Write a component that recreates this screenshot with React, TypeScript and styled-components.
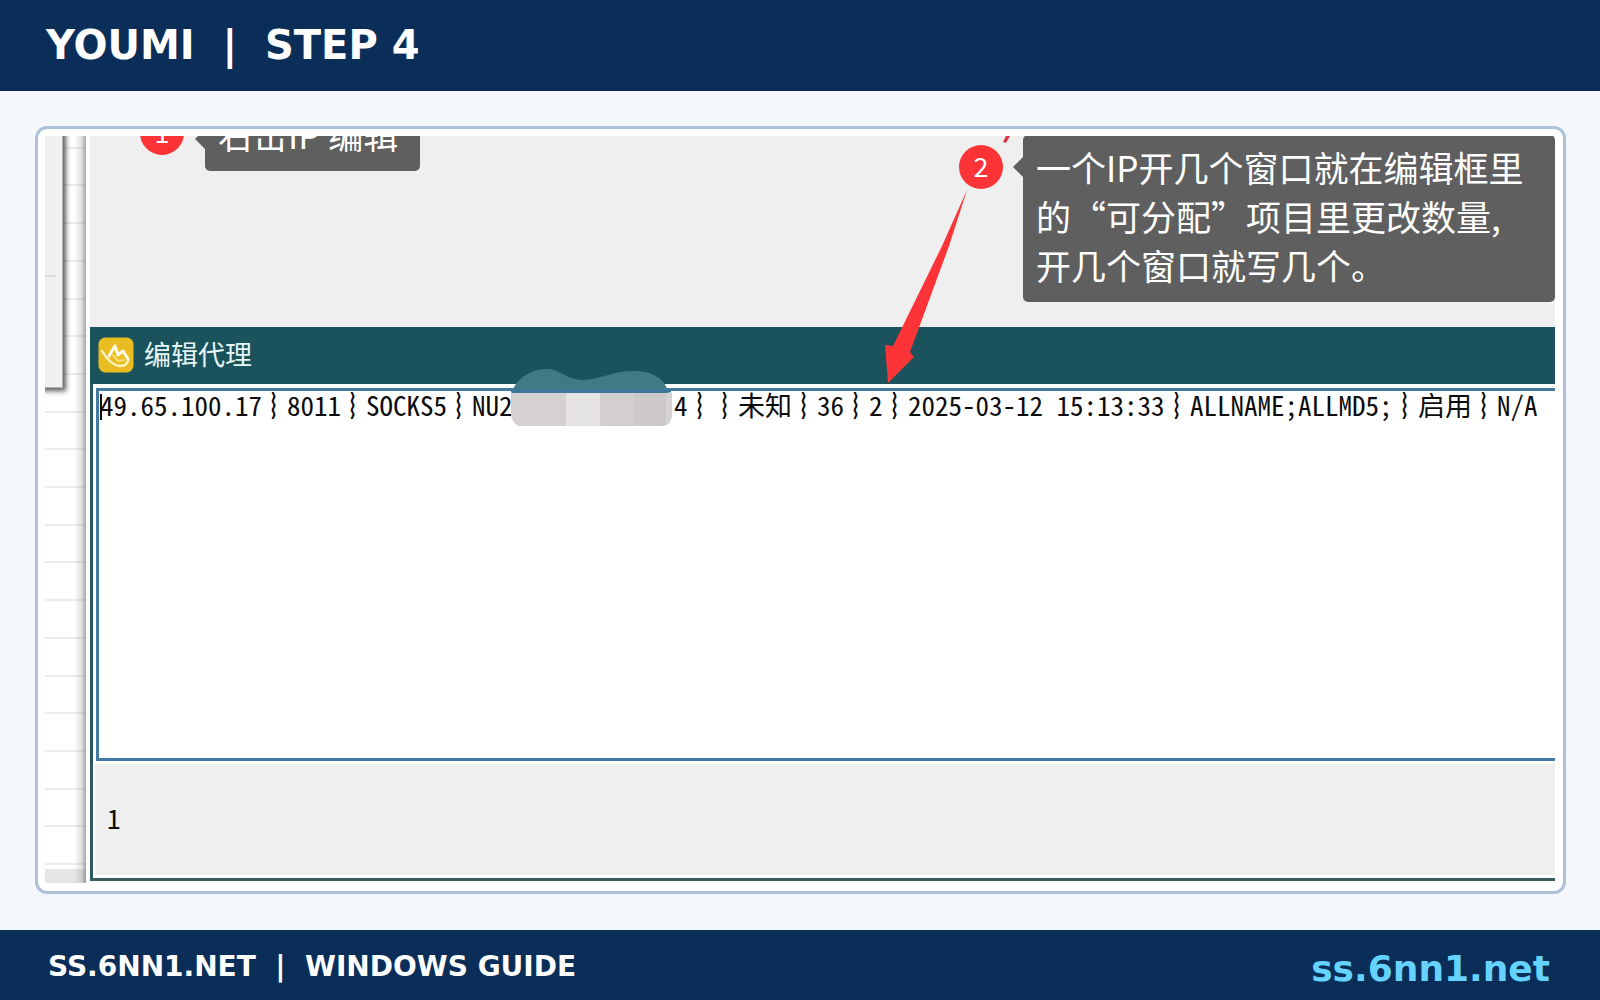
import React from 'react';
import styled, { createGlobalStyle } from 'styled-components';

const brandFont = '"DejaVu Sans", Verdana, sans-serif';
const uiFont = '"Noto Sans CJK SC", "Noto Sans", sans-serif';
const cellFont = '"Noto Sans Mono CJK SC", "Liberation Mono", "Noto Sans CJK SC", monospace';

const navy = '#0b2e59';
const teal = '#1a535c';
const red = '#fc3438';
const slate = '#5f5f5f';

const GlobalStyle = createGlobalStyle`
  *, *::before, *::after { box-sizing: border-box; }
  body { margin: 0; background: #f4f7fc; }
`;

const Page = styled.div`
  display: flex;
  flex-direction: column;
  min-height: 100vh;
  font-family: ${brandFont};
  background: #f4f7fc;
`;

const Header = styled.header`
  display: flex;
  align-items: center;
  height: 91px;
  padding: 0 46px 2px;
  background: ${navy};
`;

const Title = styled.h1`
  margin: 0;
  font-size: 40px;
  line-height: 48px;
  font-weight: 700;
  color: #fff;
  white-space: pre;
`;

const Main = styled.main`
  display: flex;
  flex: 1;
  padding: 35px 34px 36px 35px;
`;

const Card = styled.section`
  display: flex;
  flex: 1;
  min-width: 0;
  padding: 7px 8px 8px 7px;
  border: 3px solid #adc1da;
  border-radius: 12px;
  background: #fff;
`;

const Capture = styled.div`
  position: relative;
  display: grid;
  grid-template-columns: 43px minmax(0, 1fr);
  flex: 1;
  min-width: 0;
  overflow: hidden;
  font-family: ${uiFont};
`;

const Backdrop = styled.div`
  position: relative;
  display: flex;
  flex-direction: column;
  margin-right: 2px;
  overflow: hidden;
  background: #fff;
  &::after {
    content: '';
    position: absolute;
    inset: 0 0 0 auto;
    width: 12px;
    background: linear-gradient(to right, rgba(120, 112, 118, 0), rgba(120, 112, 118, 0.2) 60%, rgba(110, 104, 108, 0.6));
  }
`;

const SheetRows = styled.div`
  display: flex;
  flex-direction: column;
  flex: 1;
  margin-top: -25px;
`;

const SheetRow = styled.div`
  flex: 1;
  border-bottom: 2px solid #ececec;
`;

const SheetFoot = styled.div`
  height: 14px;
  margin-top: 4px;
  background: #e6e6e6;
`;

const SidePanel = styled.div`
  position: absolute;
  top: -10px;
  left: -10px;
  width: 28px;
  height: 262px;
  padding: 149px 6px 0 0;
  border-right: 1px solid #b4b4b4;
  border-bottom: 1px solid #b4b4b4;
  background: #f0f0f0;
  box-shadow: 2px 2px 5px 1px rgba(0, 0, 0, 0.65);
`;

const PanelRule = styled.hr`
  margin: 0;
  border: 0;
  border-top: 2px solid #dcdcdc;
`;

const Desktop = styled.div`
  display: flex;
  flex-direction: column;
  min-width: 0;
  padding: 0 0 2px 2px;
`;

const Workspace = styled.div`
  height: 191px;
  background: #efefef;
`;

const Dialog = styled.div`
  display: flex;
  flex-direction: column;
  flex: 1;
  border-left: 3px solid #2b5a61;
  border-bottom: 3px solid #3b5a5d;
  background: #fff;
`;

const DialogBar = styled.div`
  display: flex;
  align-items: center;
  gap: 10px;
  height: 57px;
  padding: 0 0 2px 8px;
  margin-left: -3px;
  background: ${teal};
`;

const DialogTitle = styled.h2`
  margin: 0;
  padding-bottom: 2px;
  font-size: 27px;
  line-height: 36px;
  font-weight: 400;
  color: #e6f5f6;
`;

const Editor = styled.form`
  flex: 1;
  margin: 4px 0 0 3px;
  border: 3px solid #427aa2;
  border-right: 0;
  background: #fff;
`;

const Record = styled.div`
  display: flex;
  align-items: center;
  height: 28px;
  padding-left: 1px;
  font-family: ${cellFont};
  font-size: 27px;
  line-height: 36px;
  color: #0c0c0c;
  &::before {
    content: '';
    width: 2px;
    height: 26px;
    margin: 4px -2px 0 0;
    background: currentColor;
  }
`;

const Field = styled.input<{ $cells: number }>`
  flex: none;
  width: ${(p) => Math.ceil(p.$cells * 13.5)}px;
  height: 36px;
  padding: 0;
  border: 0;
  outline: 0;
  background: transparent;
  color: inherit;
  font: inherit;
`;

const Divider = styled.span`
  flex: none;
  width: 25px;
  padding-left: 9px;
  font-weight: 700;
`;

const Hidden = styled.span`
  flex: none;
  width: 161px;
`;

const Status = styled.div`
  display: flex;
  align-items: center;
  height: 111px;
  margin: 3px 0 3px 2px;
  padding: 0 12px 4px;
  background: #efefef;
  font-family: ${cellFont};
  font-size: 27px;
  line-height: 36px;
  color: #0c0c0c;
`;

const Callout = styled.div<{ $left: number; $top: number; $width?: number; $arrow: number }>`
  position: absolute;
  left: ${(p) => p.$left}px;
  top: ${(p) => p.$top}px;
  ${(p) => (p.$width ? `width: ${p.$width}px;` : 'right: 0;')}
  padding: 7px 13px 13px;
  border-radius: 5px;
  background: ${slate};
  color: #fff;
  font-size: 35px;
  line-height: 49px;
  white-space: pre;
  &::before {
    content: '';
    position: absolute;
    right: 100%;
    top: ${(p) => p.$arrow}px;
    border: 10px solid transparent;
    border-left-width: 0;
    border-right-color: ${slate};
  }
`;

const Badge = styled.span<{ $left: number; $top: number }>`
  position: absolute;
  left: ${(p) => p.$left}px;
  top: ${(p) => p.$top}px;
  display: flex;
  align-items: center;
  justify-content: center;
  width: 44px;
  height: 44px;
  padding-bottom: 2px;
  border-radius: 50%;
  background: ${red};
  color: #fff;
  font-size: 27px;
  line-height: 36px;
`;

const Overlay = styled.svg<{ $left: number; $top: number }>`
  position: absolute;
  left: ${(p) => p.$left}px;
  top: ${(p) => p.$top}px;
`;

const Footer = styled.footer`
  display: flex;
  align-items: center;
  justify-content: space-between;
  height: 70px;
  padding: 8px 50px 0 48px;
  background: ${navy};
  font-weight: 700;
`;

const Guide = styled.span`
  padding-bottom: 4px;
  font-size: 28px;
  line-height: 36px;
  color: #fff;
  white-space: pre;
`;

const SiteLink = styled.a`
  font-size: 36px;
  line-height: 48px;
  color: #66d3ff;
  text-decoration: none;
`;

type Item = { label: string; value: string; cells: number } | 'divider' | 'hidden';

const record: Item[] = [
  { label: 'IP', value: '49.65.100.17', cells: 12 },
  'divider',
  { label: 'Port', value: '8011', cells: 4 },
  'divider',
  { label: 'Protocol', value: 'SOCKS5', cells: 6 },
  'divider',
  { label: 'User', value: 'NU2', cells: 3 },
  'hidden',
  { label: 'Password', value: '4', cells: 1 },
  'divider',
  'divider',
  { label: 'Region', value: '未知', cells: 4 },
  'divider',
  { label: 'Delay', value: '36', cells: 2 },
  'divider',
  { label: 'Assignable', value: '2', cells: 1 },
  'divider',
  { label: 'Expires', value: '2025-03-12 15:13:33', cells: 19 },
  'divider',
  { label: 'Names', value: 'ALLNAME;ALLMD5;', cells: 15 },
  'divider',
  { label: 'State', value: '启用', cells: 4 },
  'divider',
  { label: 'Note', value: 'N/A', cells: 3 },
];

const AppIcon = () => (
  <svg width="36" height="36" viewBox="0 0 36 36" aria-hidden="true">
    <rect x="0.5" y="0.5" width="35" height="35" rx="7" fill="#e9bd22" />
    <path d="M4 14 C8 21 13 28 22 29 C26 29 29 27 30 24" fill="none" stroke="#fff3c4" strokeWidth="2.4" strokeLinecap="round" />
    <path d="M11 19 L17 9 L20 18 L25 14 L30 22" fill="none" stroke="#fffbe8" strokeWidth="3" strokeLinejoin="round" strokeLinecap="round" />
    <path d="M15 18 L20 24 L26 23" fill="none" stroke="#f6dc7a" strokeWidth="2" strokeLinecap="round" />
  </svg>
);

const Arrow = () => (
  <Overlay $left={835} $top={0} width="140" height="250" aria-hidden="true">
    <path d="M87 54 L62 110 L13 210 L5 209 L8 247 L34 221 L30 216 L69 110 Z" fill={red} />
    <path d="M123 6 L126 0 L130 0 L126 7 Z" fill="#e0364a" />
  </Overlay>
);

const Mosaic = () => (
  <Overlay $left={466} $top={232} width="162" height="60" aria-hidden="true">
    <path d="M1 25 C4 12 18 2 34 1 C49 0 54 12 73 12 C90 11 102 3 122 3 C140 3 155 10 157 25 Z" fill="#417984" />
    <path d="M0 23 H160" stroke="#3c769a" strokeWidth="3" />
    <path d="M0 25 H56 V58 H8 Q3 57 0 48 Z" fill="#d5d1d1" />
    <rect x="55" y="25" width="34" height="33" fill="#e6e3e3" />
    <rect x="89" y="25" width="34" height="33" fill="#d3cfcf" />
    <path d="M123 25 H161 V46 Q160 58 152 58 H123 Z" fill="#cdc9c9" />
    <path d="M155 25 H161 V46 Q160 55 155 57 Z" fill="#d6d3d3" />
  </Overlay>
);

export default function App() {
  return (
    <Page>
      <GlobalStyle />
      <Header>
        <Title>{'YOUMI  |  STEP 4'}</Title>
      </Header>
      <Main>
        <Card>
          <Capture>
            <Backdrop>
              <SheetRows>
                {Array.from({ length: 20 }, (_, i) => (
                  <SheetRow key={i} />
                ))}
              </SheetRows>
              <SheetFoot />
              <SidePanel>
                <PanelRule />
              </SidePanel>
            </Backdrop>
            <Desktop>
              <Workspace />
              <Dialog>
                <DialogBar>
                  <AppIcon />
                  <DialogTitle>编辑代理</DialogTitle>
                </DialogBar>
                <Editor>
                  <Record>
                    {record.map((item, i) => {
                      if (item === 'divider') return <Divider key={i}>︴</Divider>;
                      if (item === 'hidden') return <Hidden key={i} />;
                      return (
                        <Field
                          key={i}
                          type="text"
                          aria-label={item.label}
                          defaultValue={item.value}
                          $cells={item.cells}
                        />
                      );
                    })}
                  </Record>
                </Editor>
                <Status>1</Status>
              </Dialog>
            </Desktop>
            <Callout $left={160} $top={-34} $width={215} $arrow={27}>右击IP 编辑</Callout>
            <Badge $left={95} $top={-25}>1</Badge>
            <Callout $left={978} $top={-1} $arrow={22}>
              {'一个IP开几个窗口就在编辑框里\n的“可分配”项目里更改数量,\n开几个窗口就写几个。'}
            </Callout>
            <Badge $left={914} $top={9}>2</Badge>
            <Arrow />
            <Mosaic />
          </Capture>
        </Card>
      </Main>
      <Footer>
        <Guide>{'SS.6NN1.NET  |  WINDOWS GUIDE'}</Guide>
        <SiteLink href="#">ss.6nn1.net</SiteLink>
      </Footer>
    </Page>
  );
}
